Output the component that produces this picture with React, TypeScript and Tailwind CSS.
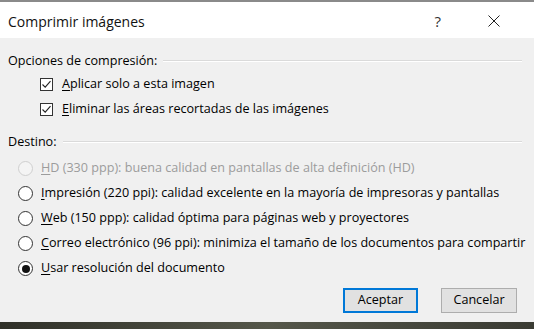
import React from "react";

const font = { fontFamily: '"Segoe UI", "Open Sans", "Noto Sans", sans-serif' };

function U({ c }: { c: string }) {
  return <span className="underline underline-offset-2 decoration-1">{c}</span>;
}

function Check({ children }: { children: React.ReactNode }) {
  return (
    <div className="flex items-center h-[25px] pl-[40px]">
      <div className="w-[13px] h-[13px] border border-[#333] bg-white flex items-center justify-center">
        <svg width="11" height="11" viewBox="0 0 11 11">
          <path d="M1.5 5.5 L4.2 8.2 L9.5 2.2" fill="none" stroke="#222" strokeWidth="1.1" />
        </svg>
      </div>
      <span className="ml-[9px] text-[12.6px] text-[#000]">{children}</span>
    </div>
  );
}

function Radio({ children, disabled, checked }: { children: React.ReactNode; disabled?: boolean; checked?: boolean }) {
  return (
    <div className="flex items-center h-[25px] pl-[18px]">
      <div
        className={
          "w-[15px] h-[15px] rounded-full border flex items-center justify-center " +
          (disabled ? "border-[#cfcfcf] bg-[#f4f4f4]" : "border-[#333] bg-white")
        }
      >
        {checked && <div className="w-[8px] h-[8px] rounded-full bg-[#111]" />}
      </div>
      <span className={"ml-[8px] text-[12.6px] " + (disabled ? "text-[#9c9c9c]" : "text-[#000]")}>{children}</span>
    </div>
  );
}

function Section({ title }: { title: string }) {
  return (
    <div className="flex items-center h-[20px] pl-[8px] pr-[12px]">
      <span className="text-[12.6px] text-[#000]">{title}</span>
      <div className="flex-1 ml-[6px] flex flex-col">
        <div className="h-px bg-[#dadada]" />
        <div className="h-px bg-white" />
      </div>
    </div>
  );
}

export default function App() {
  return (
    <div className="w-[534px] h-[329px] flex flex-col overflow-hidden" style={font}>
      <div className="h-[2px] bg-[#8a8a8a]" />
      <div className="h-[36px] bg-white flex items-center pl-[8px] pt-[2px]">
        <span className="text-[14px] text-[#111] flex-1">Comprimir imágenes</span>
        <span className="text-[15px] text-[#333] mr-[47px]">?</span>
        <svg width="12" height="12" viewBox="0 0 12 12" className="mr-[34px]">
          <path d="M0.5 0.5 L11.5 11.5 M11.5 0.5 L0.5 11.5" stroke="#222" strokeWidth="1" />
        </svg>
      </div>
      <div className="flex-1 bg-[#f0f0f0] flex flex-col pt-[13px]">
        <Section title="Opciones de compresión:" />
        <div className="pt-px">
          <Check>
            <U c="A" />plicar solo a esta imagen
          </Check>
          <Check>
            <U c="E" />liminar las áreas recortadas de las imágenes
          </Check>
        </div>
        <div className="mt-[10px]">
          <Section title="Destino:" />
        </div>
        <div className="pt-[4px]">
          <Radio disabled>
            <U c="H" />D (330 ppp): buena calidad en pantallas de alta definición (HD)
          </Radio>
          <Radio>
            <U c="I" />mpresión (220 ppi): calidad excelente en la mayoría de impresoras y pantallas
          </Radio>
          <Radio>
            <U c="W" />eb (150 ppp): calidad óptima para páginas web y proyectores
          </Radio>
          <Radio>
            <U c="C" />orreo electrónico (96 ppi): minimiza el tamaño de los documentos para compartir
          </Radio>
          <Radio checked>
            <U c="U" />sar resolución del documento
          </Radio>
        </div>
        <div className="flex justify-end gap-[23px] pr-[17px] mt-[7px]">
          <button className="w-[75px] h-[25px] border-2 border-[#0078d7] bg-[#e1e1e1] text-[12.6px] text-[#000]">Aceptar</button>
          <button className="w-[76px] h-[25px] border border-[#adadad] bg-[#e1e1e1] text-[12.6px] text-[#000]">Cancelar</button>
        </div>
      </div>
      <div className="h-[7px] bg-gradient-to-r from-[#2f3028] via-[#55574a] to-[#3a3b33]" />
    </div>
  );
}
